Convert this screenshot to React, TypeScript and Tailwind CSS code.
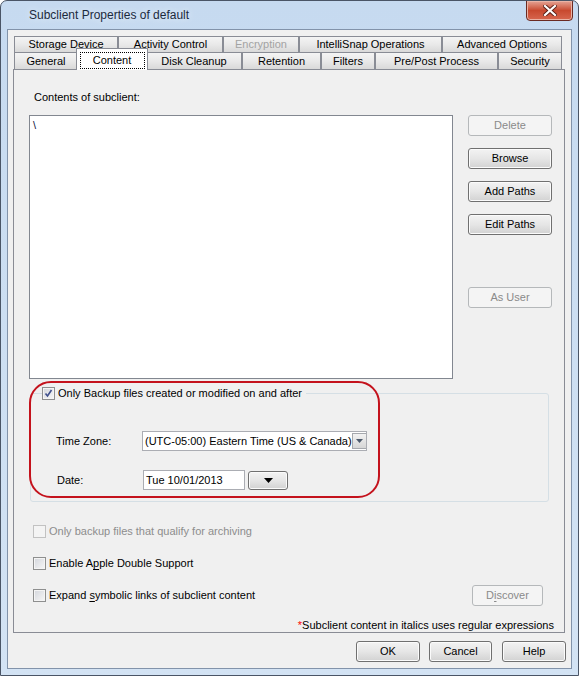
import React from "react";

const btnBase =
  "flex items-center justify-center rounded-[3px] border text-[11px] leading-none";
const btnOn =
  "border-[#707070] bg-linear-to-b from-[#f3f3f3] via-[#e6e6e6] to-[#d2d2d2] text-black shadow-[inset_0_0_0_1px_#fbfbfb]";
const btnOff = "border-[#b5b8ba] bg-[#f4f4f4] text-[#8a8a8a]";

function Button({
  children,
  disabled,
  className = "",
}: {
  children: React.ReactNode;
  disabled?: boolean;
  className?: string;
}) {
  return (
    <div className={`${btnBase} ${disabled ? btnOff : btnOn} h-[21px] ${className}`}>
      {children}
    </div>
  );
}

function Check({ checked, disabled }: { checked?: boolean; disabled?: boolean }) {
  if (disabled) {
    return <div className="h-[13px] w-[13px] shrink-0 border border-[#c2c2c2] bg-[#f4f4f4]" />;
  }
  return (
    <div className="flex h-[13px] w-[13px] shrink-0 items-center justify-center border border-[#8e8f8f] bg-linear-to-br from-[#d3d6dc] to-[#f7f7f7] shadow-[inset_0_0_0_1px_#f4f4f4]">
      {checked && (
        <svg width="9" height="9" viewBox="0 0 9 9">
          <path d="M1.5 4.5 L3.5 7 L7.5 1" fill="none" stroke="#3f4f8c" strokeWidth="1.6" />
        </svg>
      )}
    </div>
  );
}

const row1 = [
  { t: "Storage Device", w: "w-[104px]" },
  { t: "Activity Control", w: "w-[105px]" },
  { t: "Encryption", w: "w-[76px]", off: true },
  { t: "IntelliSnap Operations", w: "w-[143px]" },
  { t: "Advanced Options", w: "w-[120px]" },
];

const row2 = [
  { t: "General", w: "w-[64px]" },
  { t: "Content", w: "w-[68px]", sel: true },
  { t: "Disk Cleanup", w: "w-[96px]" },
  { t: "Retention", w: "w-[79px]" },
  { t: "Filters", w: "w-[54px]" },
  { t: "Pre/Post Process", w: "w-[123px]" },
  { t: "Security", w: "w-[64px]" },
];

const tabCls =
  "flex items-center justify-center border-x border-t border-[#898c95] bg-linear-to-b from-[#f4f4f4] via-[#e9e9e9] to-[#d9d9d9] text-[11px] leading-none";

export default function App() {
  return (
    <div className="flex h-[676px] w-[579px] flex-col overflow-hidden rounded-t-[7px] border border-[#4a5566] bg-linear-to-b from-[#c6daf0] to-[#d3e3f4] font-['Liberation_Sans',Arial,sans-serif] text-black">
      {/* title bar */}
      <div className="relative flex h-[28px] shrink-0 items-center pl-[28px]">
        <span className="text-[12px] text-[#1b2a3d] [text-shadow:0_0_6px_#eaf2fb]">
          Subclient Properties of default
        </span>
        <div className="absolute right-[5px] top-[-1px] flex h-[21px] w-[47px] items-center justify-center rounded-b-[4px] border border-[#6b2a22] bg-linear-to-b from-[#e4a395] via-[#c8492f] to-[#d7664e] shadow-[inset_0_0_0_1px_#eab3a5]">
          <svg width="14" height="11" viewBox="0 0 14 11">
            <path
              d="M2 1 L12 10 M12 1 L2 10"
              stroke="#5a2018"
              strokeWidth="4"
              strokeLinecap="square"
            />
            <path
              d="M2 1 L12 10 M12 1 L2 10"
              stroke="#ffffff"
              strokeWidth="2.2"
              strokeLinecap="square"
            />
          </svg>
        </div>
      </div>

      {/* client area */}
      <div className="ml-[6px] flex h-[640px] w-[565px] shrink-0 flex-col border border-[#8293aa] bg-[#f0f0f0]">
        {/* tabs */}
        <div className="ml-[6px] mt-[6px] flex h-[16px]">
          {row1.map((t) => (
            <div
              key={t.t}
              className={`${tabCls} ${t.w} h-[16px] ${t.off ? "text-[#a3a3a3]" : ""}`}
            >
              {t.t}
            </div>
          ))}
        </div>
        <div className="ml-[6px] flex h-[17px] items-end">
          {row2.map((t) =>
            t.sel ? (
              <div
                key={t.t}
                className="relative top-[1px] z-10 -mx-[2px] flex h-[22px] w-[72px] items-start justify-center border-x border-t border-[#898c95] bg-white pt-[3px]"
              >
                <div className="flex h-[17px] w-[65px] items-center justify-center border border-dotted border-black text-[11px] leading-none">
                  {t.t}
                </div>
              </div>
            ) : (
              <div key={t.t} className={`${tabCls} ${t.w} h-[17px]`}>
                {t.t}
              </div>
            )
          )}
        </div>

        {/* panel */}
        <div className="ml-[5px] flex h-[564px] w-[552px] flex-col border border-[#898c95] bg-[#f0f0f0]">
          <div className="pl-[20px] pt-[21px] text-[11px] leading-[13px]">Contents of subclient:</div>

          <div className="mt-[11px] flex">
            <div className="ml-[15px] h-[264px] w-[424px] border border-[#828790] bg-white px-[3px] pt-[2px] text-[11px] leading-[14px] text-[#101040]">
              \
            </div>
            <div className="ml-[15px] flex w-[84px] flex-col gap-[12px]">
              <Button disabled>Delete</Button>
              <Button>Browse</Button>
              <Button>Add Paths</Button>
              <Button>Edit Paths</Button>
              <Button disabled className="mt-[40px]">
                As User
              </Button>
            </div>
          </div>

          {/* group box */}
          <div className="relative ml-[16px] mt-[14px] h-[109px] w-[519px] rounded-[3px] border border-[#d5dfe5] pl-[25px] pt-[37px]">
            <div className="absolute left-[11px] top-[-7px] flex items-center gap-[3px] bg-[#f0f0f0] pr-[4px] text-[11px] leading-[13px]">
              <Check checked />
              <span>Only Backup files created or modified on and after</span>
            </div>
            <div className="flex h-[20px] items-center text-[11px]">
              <span className="w-[86px]">Time Zone:</span>
              <div className="flex h-[20px] w-[225px] items-center overflow-hidden border border-[#abadb3] bg-white pl-[2px]">
                <span className="flex-1 whitespace-nowrap leading-none">
                  (UTC-05:00) Eastern Time (US &amp; Canada)
                </span>
                <div className="mr-px flex h-[16px] w-[16px] shrink-0 items-center justify-center border border-[#a5a8ad] bg-linear-to-b from-[#f2f2f2] to-[#d6d6d6]">
                  <svg width="7" height="4" viewBox="0 0 7 4">
                    <path d="M0 0 L7 0 L3.5 4 Z" fill="#4d5a6c" />
                  </svg>
                </div>
              </div>
            </div>
            <div className="mt-[19px] flex h-[20px] items-center text-[11px]">
              <span className="w-[87px] pl-[1px]">Date:</span>
              <div className="flex h-[20px] w-[102px] items-center border border-[#abadb3] bg-white pl-[2px] leading-none">
                Tue 10/01/2013
              </div>
              <div className={`${btnBase} ${btnOn} ml-[3px] h-[19px] w-[40px]`}>
                <svg width="9" height="5" viewBox="0 0 9 5">
                  <path d="M0 0 L9 0 L4.5 5 Z" fill="#000" />
                </svg>
              </div>
            </div>

            {/* highlight */}
            <div className="pointer-events-none absolute left-[-2px] top-[-13px] h-[117px] w-[351px] rounded-[22px] border-2 border-[#c4121c]" />
          </div>

          {/* checkboxes */}
          <div className="mt-[23px] flex h-[13px] items-center gap-[3px] pl-[19px] text-[11px] text-[#8d8d8d]">
            <Check disabled />
            <span>Only backup files that qualify for archiving</span>
          </div>
          <div className="mt-[19px] flex h-[13px] items-center gap-[3px] pl-[19px] text-[11px]">
            <Check />
            <span>
              Enable A<span className="underline underline-offset-2">p</span>ple Double Support
            </span>
          </div>
          <div className="mt-[15px] flex h-[21px] items-center pl-[19px] text-[11px]">
            <Check />
            <span className="ml-[3px]">
              Expand <span className="underline underline-offset-2">s</span>ymbolic links of subclient content
            </span>
            <Button disabled className="ml-auto mr-[21px] w-[71px]">
              D<span className="underline underline-offset-2">i</span>scover
            </Button>
          </div>
          <div className="mt-[13px] pr-[10px] text-right text-[11px] leading-[13px]">
            <span className="text-[#ff0000]">*</span>Subclient content in italics uses regular expressions
          </div>
        </div>

        {/* bottom buttons */}
        <div className="mt-[8px] flex justify-end pr-[5px]">
          <Button className="w-[64px]">OK</Button>
          <Button className="ml-[9px] w-[63px]">Cancel</Button>
          <Button className="ml-[10px] w-[64px]">Help</Button>
        </div>
      </div>
    </div>
  );
}
